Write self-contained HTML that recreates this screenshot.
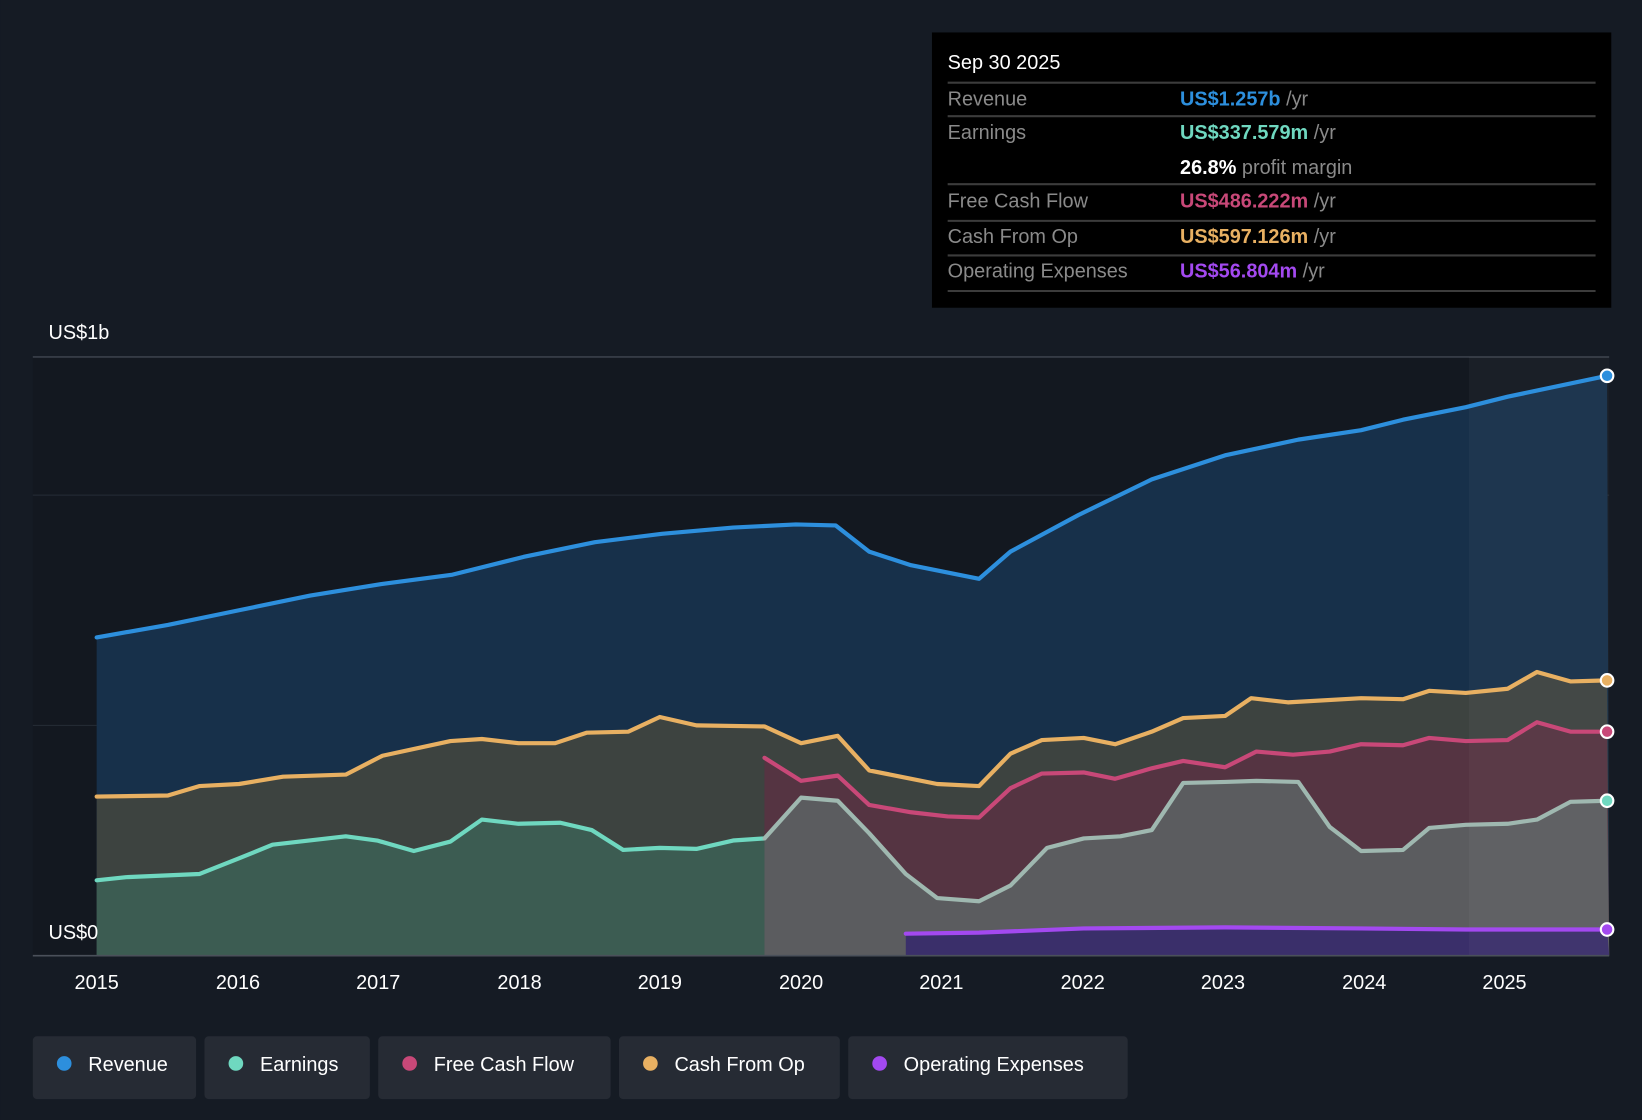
<!DOCTYPE html>
<html><head><meta charset="utf-8"><style>
html,body{margin:0;padding:0;background:#151b24;}
svg{display:block}
text{font-family:"Liberation Sans",sans-serif}
</style></head><body>
<svg width="1642" height="1120" viewBox="0 0 1568 1070" xmlns="http://www.w3.org/2000/svg">
<rect width="1568" height="1070" fill="#151b24"/>
<rect x="31" y="341" width="1506" height="572" fill="#131820"/>
<line x1="31" y1="341" x2="1537" y2="341" stroke="#3a404a" stroke-width="1.5"/>
<line x1="31" y1="473" x2="1537" y2="473" stroke="#262c36" stroke-width="1"/>
<line x1="31" y1="693" x2="1537" y2="693" stroke="#262c36" stroke-width="1"/>
<polygon fill="#17304a" points="92,913 92,609 160,597 228,583 296,569 364,558 432,549 500,532 568,518 632,510 700,504 760,501 798,502 830,527 870,540 935,553 965,527 1030,492 1100,458 1170,435 1240,420 1300,411 1340,401 1400,389 1440,379 1535,359 1537,913"/>
<polygon fill="#3d4340" points="92,913 92,761 160,760 190,751 228,749 270,742 330,740 365,722 430,708 460,706 495,710 530,710 560,700 600,699 630,685 665,693 730,694 765,710 800,703 830,736 860,742 895,749 935,751 965,720 995,707 1035,705 1065,711 1100,699 1130,686 1170,684 1195,667 1230,671 1300,667 1340,668 1365,660 1400,662 1440,658 1468,642 1500,651 1535,650 1537,913"/>
<polygon fill="#553442" points="730,913 730,724 765,746 800,741 830,769 870,776 905,780 935,781 965,753 995,739 1035,738 1065,744 1100,734 1130,727 1170,733 1200,718 1235,721 1270,718 1300,711 1340,712 1365,705 1400,708 1440,707 1468,690 1500,699 1535,699 1537,913"/>
<polygon fill="#3c5c52" points="92,913 92,841 120,838 190,835 228,820 260,807 330,799 360,803 395,813 430,804 460,783 495,787 535,786 565,793 595,812 630,810 665,811 700,803 730,801 730,913"/>
<polygon fill="#5b5c5f" points="730,913 730,801 765,762 800,765 830,796 865,835 895,858 935,861 965,846 1000,810 1035,801 1070,799 1100,793 1130,748 1170,747 1200,746 1240,747 1270,790 1300,813 1340,812 1365,791 1400,788 1440,787 1468,783 1500,766 1535,765 1537,913"/>
<polygon fill="#3a2f6a" points="865,913 865,892 935,891 1035,887 1170,886 1300,887 1400,888 1535,888 1537,913"/>
<rect x="1403" y="341" width="134" height="572" fill="#ffffff" opacity="0.03"/>
<g fill="none" stroke-width="4" stroke-linejoin="round" stroke-linecap="round">
<polyline stroke="#2d8fdd" points="92,609 160,597 228,583 296,569 364,558 432,549 500,532 568,518 632,510 700,504 760,501 798,502 830,527 870,540 935,553 965,527 1030,492 1100,458 1170,435 1240,420 1300,411 1340,401 1400,389 1440,379 1535,359"/>
<polyline stroke="#e8b062" points="92,761 160,760 190,751 228,749 270,742 330,740 365,722 430,708 460,706 495,710 530,710 560,700 600,699 630,685 665,693 730,694 765,710 800,703 830,736 860,742 895,749 935,751 965,720 995,707 1035,705 1065,711 1100,699 1130,686 1170,684 1195,667 1230,671 1300,667 1340,668 1365,660 1400,662 1440,658 1468,642 1500,651 1535,650"/>
<polyline stroke="#c84878" points="730,724 765,746 800,741 830,769 870,776 905,780 935,781 965,753 995,739 1035,738 1065,744 1100,734 1130,727 1170,733 1200,718 1235,721 1270,718 1300,711 1340,712 1365,705 1400,708 1440,707 1468,690 1500,699 1535,699"/>
<polyline stroke="#6fd8c0" points="92,841 120,838 190,835 228,820 260,807 330,799 360,803 395,813 430,804 460,783 495,787 535,786 565,793 595,812 630,810 665,811 700,803 730,801"/>
<polyline stroke="#9fb8b0" points="730,801 765,762 800,765 830,796 865,835 895,858 935,861 965,846 1000,810 1035,801 1070,799 1100,793 1130,748 1170,747 1200,746 1240,747 1270,790 1300,813 1340,812 1365,791 1400,788 1440,787 1468,783 1500,766 1535,765"/>
<polyline stroke="#a349f0" points="865,892 935,891 1035,887 1170,886 1300,887 1400,888 1535,888"/>
</g>
<g stroke="#fff" stroke-width="2">
<circle cx="1535" cy="359" r="6" fill="#2d8fdd"/>
<circle cx="1535" cy="650" r="6" fill="#e8b062"/>
<circle cx="1535" cy="699" r="6" fill="#c84878"/>
<circle cx="1535" cy="765" r="6" fill="#6fd8c0"/>
<circle cx="1535" cy="888" r="6" fill="#a349f0"/>
</g>
<line x1="31" y1="913" x2="1537" y2="913" stroke="#4a505a" stroke-width="1.5"/>
<text x="46" y="324" fill="#fff" font-size="19">US$1b</text>
<text x="46" y="897" fill="#fff" font-size="19">US$0</text>
<g fill="#fff" font-size="19" text-anchor="middle">
<text x="92" y="945">2015</text><text x="227" y="945">2016</text><text x="361" y="945">2017</text><text x="496" y="945">2018</text><text x="630" y="945">2019</text><text x="765" y="945">2020</text><text x="899" y="945">2021</text><text x="1034" y="945">2022</text><text x="1168" y="945">2023</text><text x="1303" y="945">2024</text><text x="1437" y="945">2025</text>
</g>
<rect x="890" y="31" width="649" height="263" fill="#000"/>
<text x="905" y="66" fill="#fff" font-size="19">Sep 30 2025</text>
<g stroke="#3c3c3c" stroke-width="2">
<line x1="905" y1="79" x2="1524" y2="79"/><line x1="905" y1="111" x2="1524" y2="111"/><line x1="905" y1="176" x2="1524" y2="176"/><line x1="905" y1="211" x2="1524" y2="211"/><line x1="905" y1="244" x2="1524" y2="244"/><line x1="905" y1="278" x2="1524" y2="278"/>
</g>
<g font-size="19" fill="#8a8a8a">
<text x="905" y="101">Revenue</text><text x="905" y="133">Earnings</text><text x="905" y="198">Free Cash Flow</text><text x="905" y="232">Cash From Op</text><text x="905" y="265">Operating Expenses</text>
<text x="1127" y="101"><tspan fill="#2d8fdd" font-weight="bold">US$1.257b</tspan> /yr</text>
<text x="1127" y="133"><tspan fill="#6fd8c0" font-weight="bold">US$337.579m</tspan> /yr</text>
<text x="1127" y="166"><tspan fill="#fff" font-weight="bold">26.8%</tspan> profit margin</text>
<text x="1127" y="198"><tspan fill="#c84878" font-weight="bold">US$486.222m</tspan> /yr</text>
<text x="1127" y="232"><tspan fill="#e8b062" font-weight="bold">US$597.126m</tspan> /yr</text>
<text x="1127" y="265"><tspan fill="#a349f0" font-weight="bold">US$56.804m</tspan> /yr</text>
</g>
<g font-size="19" fill="#fff">
<rect x="31" y="990" width="156" height="60" rx="4" fill="#262b34"/><circle cx="61" cy="1016" r="7" fill="#2d8fdd"/><text x="84" y="1023">Revenue</text>
<rect x="195" y="990" width="158" height="60" rx="4" fill="#262b34"/><circle cx="225" cy="1016" r="7" fill="#6fd8c0"/><text x="248" y="1023">Earnings</text>
<rect x="361" y="990" width="222" height="60" rx="4" fill="#262b34"/><circle cx="391" cy="1016" r="7" fill="#c84878"/><text x="414" y="1023">Free Cash Flow</text>
<rect x="591" y="990" width="211" height="60" rx="4" fill="#262b34"/><circle cx="621" cy="1016" r="7" fill="#e8b062"/><text x="644" y="1023">Cash From Op</text>
<rect x="810" y="990" width="267" height="60" rx="4" fill="#262b34"/><circle cx="840" cy="1016" r="7" fill="#a349f0"/><text x="863" y="1023">Operating Expenses</text>
</g>
</svg>
</body></html>
